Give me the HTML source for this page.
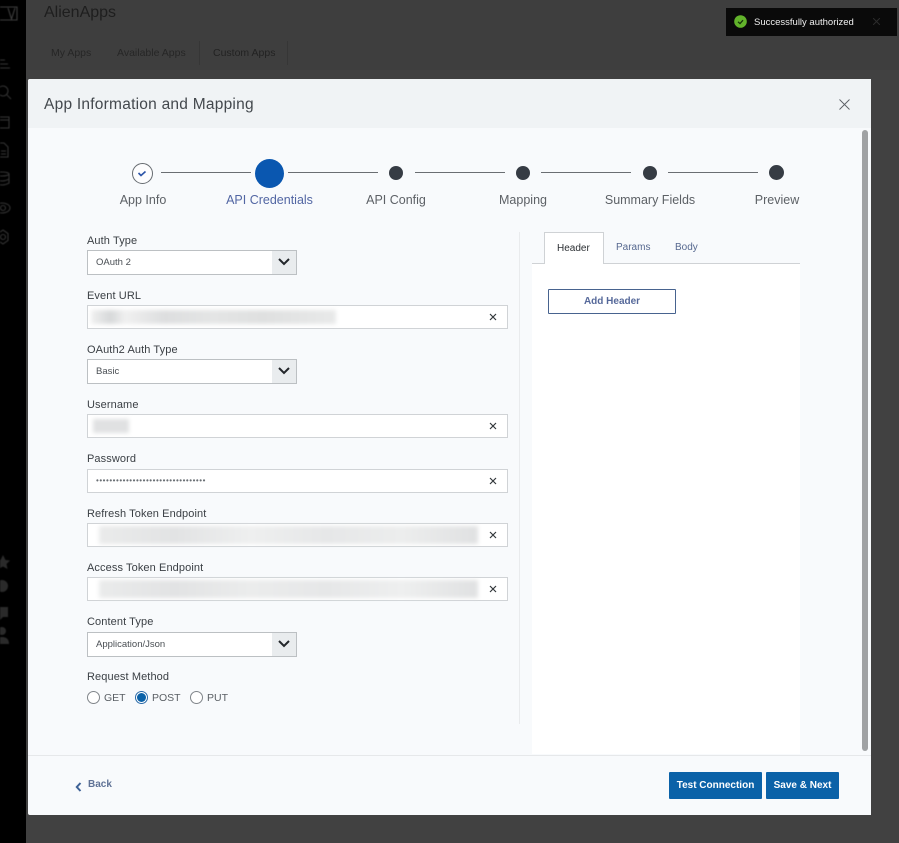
<!DOCTYPE html>
<html><head><meta charset="utf-8">
<style>
html,body{margin:0;padding:0;width:899px;height:843px;overflow:hidden;background:#414141;font-family:"Liberation Sans",sans-serif}
.a{position:absolute;white-space:nowrap}
.lbl{position:absolute;left:87px;font-size:11px;color:#3a3f44;line-height:14px;letter-spacing:.1px}
.sel{position:absolute;left:87px;width:208px;height:23px;background:#fff;border:1px solid #bcc0c3;font-size:9.5px;line-height:24px;color:#4a4f54;text-indent:8px}
.sel i{position:absolute;right:0;top:0;width:24px;height:23px;background:#e9ecee}
.sel svg{position:absolute;right:5px;top:6px}
.inp{position:absolute;left:87px;width:419px;height:22px;background:#fff;border:1px solid #d0d3d6}
.inp svg{position:absolute;right:10px;top:7px}
.blur{position:absolute;filter:blur(2px);background:#e2e3e4}
.step{position:absolute;top:193px;font-size:12.5px;line-height:15px;color:#5d6166;transform:translateX(-50%);white-space:nowrap}
.dot{position:absolute;top:166px;width:14px;height:14px;border-radius:50%;background:#363c44}
.ln{position:absolute;top:172px;height:1px;background:#6a6e72}
.tab{position:absolute;font-size:10px;color:#56688f;line-height:12px}
.rad{position:absolute;top:691px;width:11px;height:11px;border:1px solid #80858a;border-radius:50%;background:#fff}
.rt{position:absolute;top:692px;font-size:10.5px;color:#5a5f64;line-height:12px}
.btn{position:absolute;top:772px;height:27px;background:#0b62a8;border-radius:1px;color:#fff;font-weight:bold;font-size:10px;line-height:27px;text-align:center}
</style></head><body>

<div class="a" style="left:0;top:0;width:26px;height:843px;background:#000"></div>
<div class="a" style="left:26px;top:0;width:873px;height:70px;background:#3e3e3e"></div>
<div class="a" style="left:44px;top:4px;font-size:16px;line-height:18px;color:#1e1e1e">AlienApps</div>
<div class="a" style="left:51px;top:47px;font-size:10.5px;line-height:12px;color:#262626">My Apps</div>
<div class="a" style="left:117px;top:47px;font-size:10.5px;line-height:12px;color:#262626">Available Apps</div>
<div class="a" style="left:213px;top:47px;font-size:10.5px;line-height:12px;color:#222">Custom Apps</div>
<div class="a" style="left:199px;top:41px;width:1px;height:24px;background:#363636"></div>
<div class="a" style="left:287px;top:41px;width:1px;height:24px;background:#363636"></div>

<svg class="a" style="left:0;top:0;filter:blur(.4px)" width="26" height="260" fill="none" stroke="#333" stroke-width="1.100">
<path d="M0 7H17V20H0" stroke="#3e3e3e"/><path d="M8 8l3.500 11 3.500-11" stroke="#3e3e3e"/>
<path d="M0 60h5M0 64h8M0 68h10"/>
<circle cx="3" cy="91" r="5"/><path d="M7 95l4 4"/>
<rect x="-3" y="117" width="12" height="11"/><path d="M-3 120h12"/>
<path d="M-2 143h6l4 4v10h-10zM1 151h5M1 154h5"/>
<ellipse cx="2" cy="174" rx="7" ry="2"/><path d="M-5 174v9q7 4 14 0v-9M-5 179q7 4 14 0"/>
<ellipse cx="2" cy="208" rx="8" ry="5"/><circle cx="3" cy="208" r="2.500"/>
<circle cx="3" cy="237" r="2.500"/><path d="M3 230l5 3.500v7l-5 3.500-5-3.500v-7z"/>
</svg>
<svg class="a" style="left:0;top:550px;filter:blur(.5px)" width="26" height="95" fill="#2a2a2a">
<path d="M3 5l2.500 5 4.500.500-3.500 3.500 1 5-4.500-2.500-4.500 2.500 1-5-3.500-3.500 4.500-.500z"/>
<circle cx="2" cy="36" r="6"/>
<path d="M-3 57H8V67H3l-3 3v-3H-3z"/>
<circle cx="2" cy="81" r="4"/><path d="M-5 94q0-7 7-7t7 7z"/>
</svg>

<!-- toast -->
<div class="a" style="left:726px;top:8px;width:171px;height:28px;background:#0a0a0a"></div>
<svg class="a" style="left:734px;top:15px" width="13" height="13"><circle cx="6.500" cy="6.500" r="6.300" fill="#62b32b"/><path d="M4 6.800l2 1.800 3-3.400" fill="none" stroke="#15330a" stroke-width="1.300"/></svg>
<div class="a" style="left:754px;top:16px;font-size:9.500px;line-height:13px;color:#f0f0f0">Successfully authorized</div>
<svg class="a" style="left:873px;top:18px" width="7" height="7" stroke="#2c2c2c" stroke-width="1"><path d="M0 0l7 7M7 0L0 7"/></svg>

<!-- modal -->
<div class="a" style="left:28px;top:79px;width:843px;height:736px;background:#f8fafc;border-radius:2px 0 0 2px;overflow:hidden">
  <div style="position:absolute;left:0;top:0;width:843px;height:49px;background:#f0f3f5"></div>
  <div style="position:absolute;left:0;top:676px;width:843px;height:1px;background:#e6e8ea"></div>
</div>
<div class="a" style="left:44px;top:96px;font-size:15.500px;line-height:18px;color:#43484d;letter-spacing:.24px">App Information and Mapping</div>
<svg class="a" style="left:839px;top:99px" width="11" height="11" stroke="#5a5f64" stroke-width=".9" fill="none"><path d="M.5.500l10 10M10.500.500l-10 10"/></svg>

<!-- scrollbar -->
<div class="a" style="left:862px;top:130px;width:6px;height:621px;background:#a0a2a4;border-radius:3px"></div>

<!-- stepper -->
<div class="a" style="left:132px;top:163px;width:19px;height:19px;border:1px solid #666b70;border-radius:50%;background:#fdfdfe"></div>
<svg class="a" style="left:137px;top:169px" width="12" height="9"><path d="M1.500 4l2.500 2.500 4.500-4" fill="none" stroke="#2c54a8" stroke-width="1.600"/></svg>
<div class="a" style="left:255px;top:159px;width:29px;height:29px;border-radius:50%;background:#0a57b0"></div>
<div class="ln" style="left:161px;width:90px"></div>
<div class="ln" style="left:288px;width:90px"></div>
<div class="dot" style="left:389px"></div>
<div class="ln" style="left:415px;width:90px"></div>
<div class="dot" style="left:516px"></div>
<div class="ln" style="left:541px;width:90px"></div>
<div class="dot" style="left:643px"></div>
<div class="ln" style="left:668px;width:90px"></div>
<div class="dot" style="left:769px;top:165px;width:15px;height:15px"></div>
<div class="step" style="left:143px">App Info</div>
<div class="step" style="left:269.500px;color:#5266a3">API Credentials</div>
<div class="step" style="left:396px">API Config</div>
<div class="step" style="left:523px">Mapping</div>
<div class="step" style="left:650px">Summary Fields</div>
<div class="step" style="left:777px">Preview</div>

<!-- left divider and right panel -->
<div class="a" style="left:519px;top:232px;width:1px;height:492px;background:#e9ebed"></div>
<div class="a" style="left:532px;top:264px;width:268px;height:490px;background:#fff"></div>

<!-- tabs -->
<div class="a" style="left:532px;top:263px;width:268px;height:1px;background:#cfd2d5"></div>
<div class="a" style="left:544px;top:232px;width:60px;height:32px;background:#fff;border:1px solid #cfd2d5;border-bottom:none;box-sizing:border-box"></div>
<div class="tab" style="left:557px;top:243px;color:#2b2f33">Header</div>
<div class="tab" style="left:616px;top:242px">Params</div>
<div class="tab" style="left:675px;top:242px">Body</div>
<div class="a" style="left:548px;top:289px;width:126px;height:23px;border:1px solid #47638f;border-radius:1px;background:#fff;color:#56699a;font-size:10px;font-weight:bold;text-align:center;line-height:23px">Add Header</div>

<!-- form -->
<div class="lbl" style="top:234px">Auth Type</div>
<div class="sel" style="top:250px">OAuth 2<i></i><svg width="14" height="10" fill="none" stroke="#23272b" stroke-width="2"><path d="M2 2l5 5 5-5"/></svg></div>

<div class="lbl" style="top:289px">Event URL</div>
<div class="inp" style="top:305px"><div class="blur" style="left:3px;top:4px;width:245px;height:14px;background:linear-gradient(90deg,#f0f0f0 0,#d6d8d9 8%,#f0f0f0 14%,#dddedf 30%,#e4e5e5 50%,#dfe0e0 70%,#e8e9e9 100%)"></div><svg width="8" height="8" stroke="#33383c" stroke-width="1.200"><path d="M1 1l6 6M7 1L1 7"/></svg></div>

<div class="lbl" style="top:343px">OAuth2 Auth Type</div>
<div class="sel" style="top:359px">Basic<i></i><svg width="14" height="10" fill="none" stroke="#23272b" stroke-width="2"><path d="M2 2l5 5 5-5"/></svg></div>

<div class="lbl" style="top:398px">Username</div>
<div class="inp" style="top:414px"><div class="blur" style="left:5px;top:4px;width:36px;height:14px;background:#e0e1e2"></div><svg width="8" height="8" stroke="#33383c" stroke-width="1.200"><path d="M1 1l6 6M7 1L1 7"/></svg></div>

<div class="lbl" style="top:452px">Password</div>
<div class="inp" style="top:469px"><div class="a" style="left:8px;top:5px;font-size:8px;line-height:12px;color:#6a6f74;letter-spacing:.53px">&#8226;&#8226;&#8226;&#8226;&#8226;&#8226;&#8226;&#8226;&#8226;&#8226;&#8226;&#8226;&#8226;&#8226;&#8226;&#8226;&#8226;&#8226;&#8226;&#8226;&#8226;&#8226;&#8226;&#8226;&#8226;&#8226;&#8226;&#8226;&#8226;&#8226;&#8226;&#8226;&#8226;</div><svg width="8" height="8" stroke="#33383c" stroke-width="1.200"><path d="M1 1l6 6M7 1L1 7"/></svg></div>

<div class="lbl" style="top:507px">Refresh Token Endpoint</div>
<div class="inp" style="top:523px"><div class="blur" style="left:11px;top:2px;width:379px;height:18px;background:linear-gradient(90deg,#eaebeb,#e2e3e4 20%,#eeefef 40%,#e6e7e8 60%,#eceded 80%,#e0e1e2)"></div><svg width="8" height="8" stroke="#33383c" stroke-width="1.200"><path d="M1 1l6 6M7 1L1 7"/></svg></div>

<div class="lbl" style="top:561px">Access Token Endpoint</div>
<div class="inp" style="top:577px"><div class="blur" style="left:11px;top:2px;width:379px;height:18px;background:linear-gradient(90deg,#eaebeb,#e2e3e4 20%,#ebecec 40%,#e6e7e8 60%,#eeefef 80%,#e0e1e2)"></div><svg width="8" height="8" stroke="#33383c" stroke-width="1.200"><path d="M1 1l6 6M7 1L1 7"/></svg></div>

<div class="lbl" style="top:615px">Content Type</div>
<div class="sel" style="top:632px">Application/Json<i></i><svg width="14" height="10" fill="none" stroke="#23272b" stroke-width="2"><path d="M2 2l5 5 5-5"/></svg></div>

<div class="lbl" style="top:670px">Request Method</div>
<div class="rad" style="left:87px"></div><div class="rt" style="left:104px">GET</div>
<div class="rad" style="left:135px;border-color:#2a6aa8"></div><div class="a" style="left:137px;top:693px;width:9px;height:9px;border-radius:50%;background:#0b62a8"></div><div class="rt" style="left:152px">POST</div>
<div class="rad" style="left:190px"></div><div class="rt" style="left:207px">PUT</div>

<!-- footer -->
<svg class="a" style="left:75px;top:782px" width="7" height="10" fill="none" stroke="#3e6296" stroke-width="2"><path d="M5.500 1L1.800 5l3.700 4"/></svg>
<div class="a" style="left:88px;top:778px;font-size:10px;font-weight:bold;line-height:13px;color:#5f7296">Back</div>
<div class="btn" style="left:669px;width:93px">Test Connection</div>
<div class="btn" style="left:766px;width:73px">Save &amp; Next</div>

</body></html>
